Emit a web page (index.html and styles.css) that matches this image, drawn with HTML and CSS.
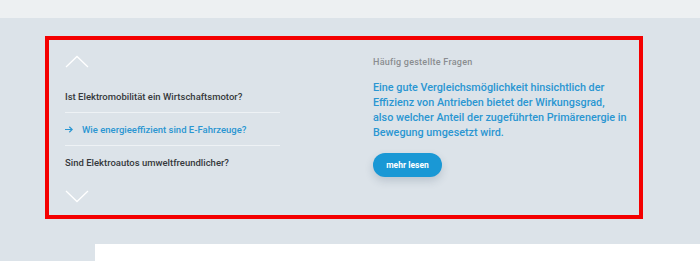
FILE: index.html
```html
<!DOCTYPE html>
<html lang="de">
<head>
<meta charset="utf-8">
<link rel="stylesheet" href="styles.css">
</head>
<body>
<div class="topbar"></div>
<section class="faq">
  <div class="faq-list">
    <svg class="chev" width="24" height="13" viewBox="0 0 24 13"><polyline points="1,12 12,1.5 23,12" fill="none" stroke="#fff" stroke-width="1.3"/></svg>
    <ul class="questions">
      <li class="q">Ist Elektromobilität ein Wirtschaftsmotor?</li>
      <li class="q active"><svg class="arrow" width="8" height="7" viewBox="0 0 8 7"><path d="M0 3.5H7.2M4.3 0.7L7.2 3.5L4.3 6.3" fill="none" stroke="#2a96d2" stroke-width="1.2"/></svg>Wie energieeffizient sind E-Fahrzeuge?</li>
      <li class="q">Sind Elektroautos umweltfreundlicher?</li>
    </ul>
    <svg class="chev down" width="24" height="13" viewBox="0 0 24 13"><polyline points="1,1 12,11.5 23,1" fill="none" stroke="#fff" stroke-width="1.3"/></svg>
  </div>
  <div class="faq-answer">
    <div class="label">Häufig gestellte Fragen</div>
    <p class="answer">Eine gute Vergleichsmöglichkeit hinsichtlich der Effizienz von Antrieben bietet der Wirkungsgrad,<br>also welcher Anteil der zugeführten Primärenergie in Bewegung umgesetzt wird.</p>
    <button class="btn">mehr lesen</button>
  </div>
</section>
<div class="card"></div>
</body>
</html>
```
FILE: styles.css
```css
html, body { margin: 0; padding: 0; }
body {
  background: #dce3e9;
  font-family: "Roboto", "Liberation Sans", sans-serif;
  height: 261px;
  overflow: hidden;
}
.topbar { height: 18px; background: #edf0f2; }
.faq {
  margin: 18px 0 0 45px;
  width: 574px;
  height: 175px;
  border: 4px solid #f40000;
  display: flex;
  padding-left: 16px;
  box-sizing: content-box;
}
.faq-list { width: 215px; padding-top: 15px; }
.chev { display: block; }
.questions { list-style: none; margin: 12px 0 0; padding: 0; }
.q {
  height: 32px;
  display: flex;
  align-items: center;
  font-size: 9.5px;
  font-weight: 500;
  color: #36393c;
  border-bottom: 1px solid #eef2f5;
}
.q:last-child { border-bottom: none; height: 33px; }
.q.active { color: #2a96d2; }
.arrow { margin-right: 9px; flex: none; }
.chev.down { margin-top: 11px; }
.faq-answer { margin-left: 93px; padding-top: 16px; width: 262px; }
.label { font-size: 9px; color: #8a8d90; font-weight: 500; line-height: 12px; letter-spacing: 0.25px; }
.answer {
  margin: 12px 0 0;
  font-size: 10.8px;
  line-height: 15px;
  font-weight: 500;
  color: #2a96d2;
}
.btn {
  margin-top: 13px;
  width: 69px;
  height: 24px;
  border: none;
  border-radius: 12px;
  background: #1a98d5;
  color: #fff;
  font-family: inherit;
  font-size: 8.5px;
  font-weight: 700;
  box-shadow: 0 4px 8px rgba(40, 60, 90, 0.18);
  padding: 0;
}
.card { margin: 25px 0 0 95px; height: 30px; background: #fff; }
```
